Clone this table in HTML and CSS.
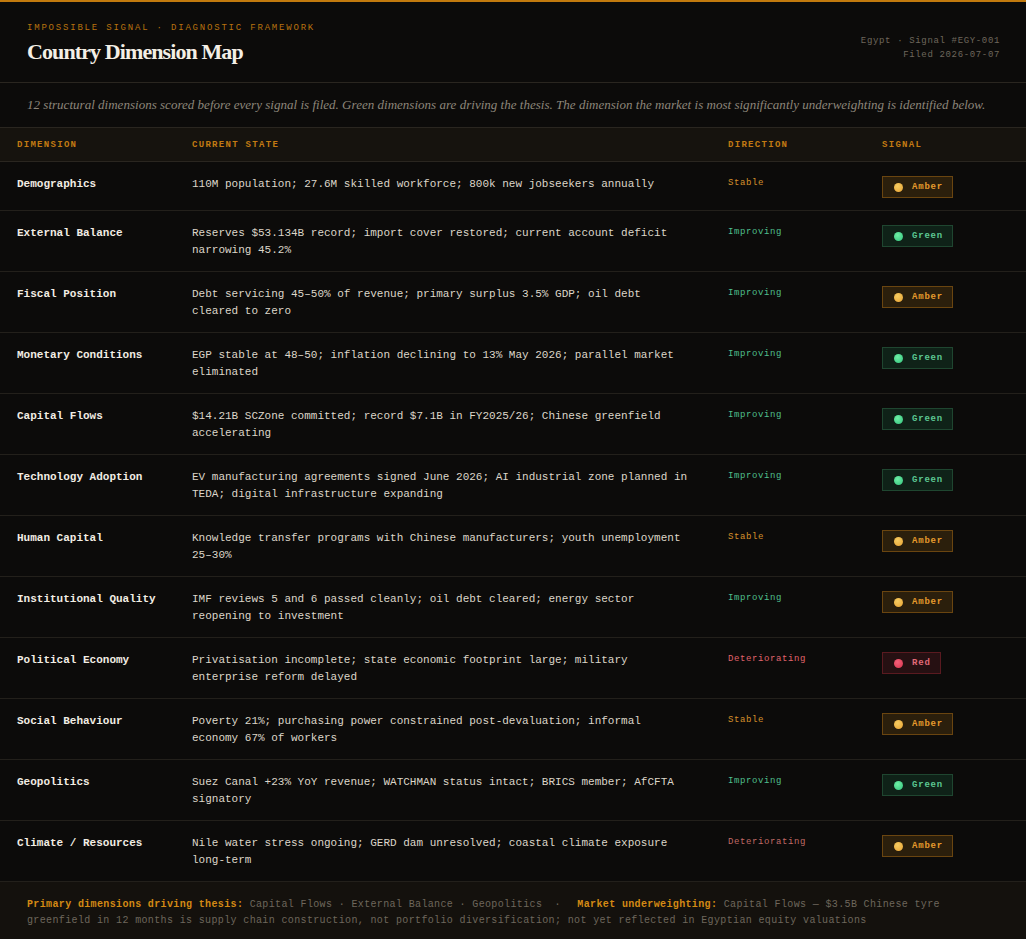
FILE: index.html
```html
<!DOCTYPE html>
<html lang="en">
<head>
<meta charset="utf-8">
<title>Country Dimension Map</title>
<link rel="stylesheet" href="styles.css">
</head>
<body>
<div class="page">
  <header class="head">
    <div class="head-left">
      <div class="kicker">IMPOSSIBLE SIGNAL · DIAGNOSTIC FRAMEWORK</div>
      <h1 class="title">Country Dimension Map</h1>
    </div>
    <div class="head-meta">
      <div>Egypt · Signal #EGY-001</div>
      <div>Filed 2026-07-07</div>
    </div>
  </header>
  <p class="intro">12 structural dimensions scored before every signal is filed. Green dimensions are driving the thesis. The dimension the market is most significantly underweighting is identified below.</p>

  <div class="table">
    <div class="row row-head">
      <div>DIMENSION</div>
      <div>CURRENT STATE</div>
      <div>DIRECTION</div>
      <div>SIGNAL</div>
    </div>

    <div class="row">
      <div class="dim">Demographics</div>
      <div class="state">110M population; 27.6M skilled workforce; 800k new jobseekers annually</div>
      <div class="dir stable">Stable</div>
      <div><span class="badge amber"><i class="dot"></i>Amber</span></div>
    </div>
    <div class="row">
      <div class="dim">External Balance</div>
      <div class="state">Reserves $53.134B record; import cover restored; current account deficit narrowing 45.2%</div>
      <div class="dir improving">Improving</div>
      <div><span class="badge green"><i class="dot"></i>Green</span></div>
    </div>
    <div class="row">
      <div class="dim">Fiscal Position</div>
      <div class="state">Debt servicing 45–50% of revenue; primary surplus 3.5% GDP; oil debt cleared to zero</div>
      <div class="dir improving">Improving</div>
      <div><span class="badge amber"><i class="dot"></i>Amber</span></div>
    </div>
    <div class="row">
      <div class="dim">Monetary Conditions</div>
      <div class="state">EGP stable at 48–50; inflation declining to 13% May 2026; parallel market eliminated</div>
      <div class="dir improving">Improving</div>
      <div><span class="badge green"><i class="dot"></i>Green</span></div>
    </div>
    <div class="row">
      <div class="dim">Capital Flows</div>
      <div class="state">$14.21B SCZone committed; record $7.1B in FY2025/26; Chinese greenfield accelerating</div>
      <div class="dir improving">Improving</div>
      <div><span class="badge green"><i class="dot"></i>Green</span></div>
    </div>
    <div class="row">
      <div class="dim">Technology Adoption</div>
      <div class="state">EV manufacturing agreements signed June 2026; AI industrial zone planned in TEDA; digital infrastructure expanding</div>
      <div class="dir improving">Improving</div>
      <div><span class="badge green"><i class="dot"></i>Green</span></div>
    </div>
    <div class="row">
      <div class="dim">Human Capital</div>
      <div class="state">Knowledge transfer programs with Chinese manufacturers; youth unemployment 25–30%</div>
      <div class="dir stable">Stable</div>
      <div><span class="badge amber"><i class="dot"></i>Amber</span></div>
    </div>
    <div class="row">
      <div class="dim">Institutional Quality</div>
      <div class="state">IMF reviews 5 and 6 passed cleanly; oil debt cleared; energy sector reopening to investment</div>
      <div class="dir improving">Improving</div>
      <div><span class="badge amber"><i class="dot"></i>Amber</span></div>
    </div>
    <div class="row">
      <div class="dim">Political Economy</div>
      <div class="state">Privatisation incomplete; state economic footprint large; military enterprise reform delayed</div>
      <div class="dir deteriorating">Deteriorating</div>
      <div><span class="badge red"><i class="dot"></i>Red</span></div>
    </div>
    <div class="row">
      <div class="dim">Social Behaviour</div>
      <div class="state">Poverty 21%; purchasing power constrained post-devaluation; informal economy 67% of workers</div>
      <div class="dir stable">Stable</div>
      <div><span class="badge amber"><i class="dot"></i>Amber</span></div>
    </div>
    <div class="row">
      <div class="dim">Geopolitics</div>
      <div class="state">Suez Canal +23% YoY revenue; WATCHMAN status intact; BRICS member; AfCFTA signatory</div>
      <div class="dir improving">Improving</div>
      <div><span class="badge green"><i class="dot"></i>Green</span></div>
    </div>
    <div class="row">
      <div class="dim">Climate / Resources</div>
      <div class="state">Nile water stress ongoing; GERD dam unresolved; coastal climate exposure long-term</div>
      <div class="dir deteriorating muted">Deteriorating</div>
      <div><span class="badge amber"><i class="dot"></i>Amber</span></div>
    </div>
  </div>

  <footer class="foot">
    <p class="foot-text"><b>Primary dimensions driving thesis:</b> Capital Flows · External Balance · Geopolitics <span class="sep">·</span> <b>Market underweighting:</b> Capital Flows — $3.5B Chinese tyre greenfield in 12 months is supply chain construction, not portfolio diversification; not yet reflected in Egyptian equity valuations</p>
  </footer>
</div>
</body>
</html>
```

FILE: styles.css
```css
* { box-sizing: border-box; }
html, body {
  margin: 0;
  padding: 0;
  background: #0c0b0a;
}
body {
  font-family: "Liberation Mono", "DejaVu Sans Mono", monospace;
  color: #e6e0d4;
}
.page {
  border-top: 2px solid #c27a0e;
  min-height: 939px;
  background: #0c0b0a;
}
.head {
  display: flex;
  justify-content: space-between;
  align-items: flex-end;
  padding: 20px 26px 17px 27px;
  border-bottom: 1px solid #2a2620;
}
.kicker {
  font-size: 9px;
  letter-spacing: 1.8px;
  color: #b8720f;
  line-height: 12px;
}
.title {
  margin: 5px 0 0 0;
  font-family: "Liberation Serif", "DejaVu Serif", serif;
  font-weight: 700;
  font-size: 22px;
  line-height: 26px;
  letter-spacing: -0.9px;
  color: #f4efe6;
}
.head-meta {
  text-align: right;
  font-size: 9px;
  letter-spacing: 0.65px;
  line-height: 14px;
  color: #6e675c;
  padding-bottom: 3px;
}
.intro {
  margin: 0;
  padding: 12px 27px 13px 27px;
  font-family: "Liberation Serif", "DejaVu Serif", serif;
  font-style: italic;
  font-size: 13px;
  letter-spacing: 0.02px;
  line-height: 19px;
  color: #8c867a;
  border-bottom: 1px solid #2a2620;
  white-space: nowrap;
}
.row {
  display: grid;
  grid-template-columns: 175px 536px 154px 1fr;
  padding: 14px 0 12px 17px;
  border-bottom: 1px solid #23201b;
  align-items: start;
}
.row-head {
  background: #16130e;
  font-size: 9px;
  font-weight: 700;
  letter-spacing: 1.3px;
  color: #c27a12;
  padding: 12px 0 11px 17px;
  line-height: 10px;
  border-bottom: 1px solid #2a2620;
}
.dim {
  font-size: 11px;
  font-weight: 700;
  line-height: 17px;
  color: #f2ede4;
}
.state {
  font-size: 11px;
  line-height: 17px;
  color: #ddd6c9;
  padding-right: 38px;
}
.dir {
  font-size: 9px;
  letter-spacing: 0.6px;
  line-height: 15px;
}
.stable { color: #d4902a; }
.improving { color: #4fbf8c; }
.deteriorating { color: #e0646c; }
.muted { color: #c06a66; }
.badge {
  display: inline-flex;
  align-items: center;
  height: 22px;
  padding: 0 9px 0 11px;
  border: 1px solid;
  font-size: 9px;
  font-weight: 700;
  letter-spacing: 0.8px;
}
.dot {
  display: inline-block;
  width: 9px;
  height: 9px;
  border-radius: 50%;
  margin-right: 9px;
}
.amber { background: #2b1f0c; border-color: #6a4510; color: #e49a2c; }
.amber .dot { background: radial-gradient(circle at 40% 35%, #f6cc62, #e8a232); }
.green { background: #0f2218; border-color: #1f4630; color: #5cc692; }
.green .dot { background: radial-gradient(circle at 40% 35%, #6ef0a6, #34c27c); }
.red { background: #261012; border-color: #5a1a20; color: #e06a78; }
.red .dot { background: radial-gradient(circle at 40% 35%, #f4607a, #d8344c); }
.foot {
  background: #14110d;
  padding: 15px 27px 12px 27px;
  min-height: 58px;
}
.foot-text {
  margin: 0;
  font-size: 10px;
  letter-spacing: 0.36px;
  line-height: 16px;
  color: #6e675c;
}
.foot-text b {
  color: #d48a14;
  font-weight: 700;
}
.sep { margin: 0 10px 0 6px; }
```
